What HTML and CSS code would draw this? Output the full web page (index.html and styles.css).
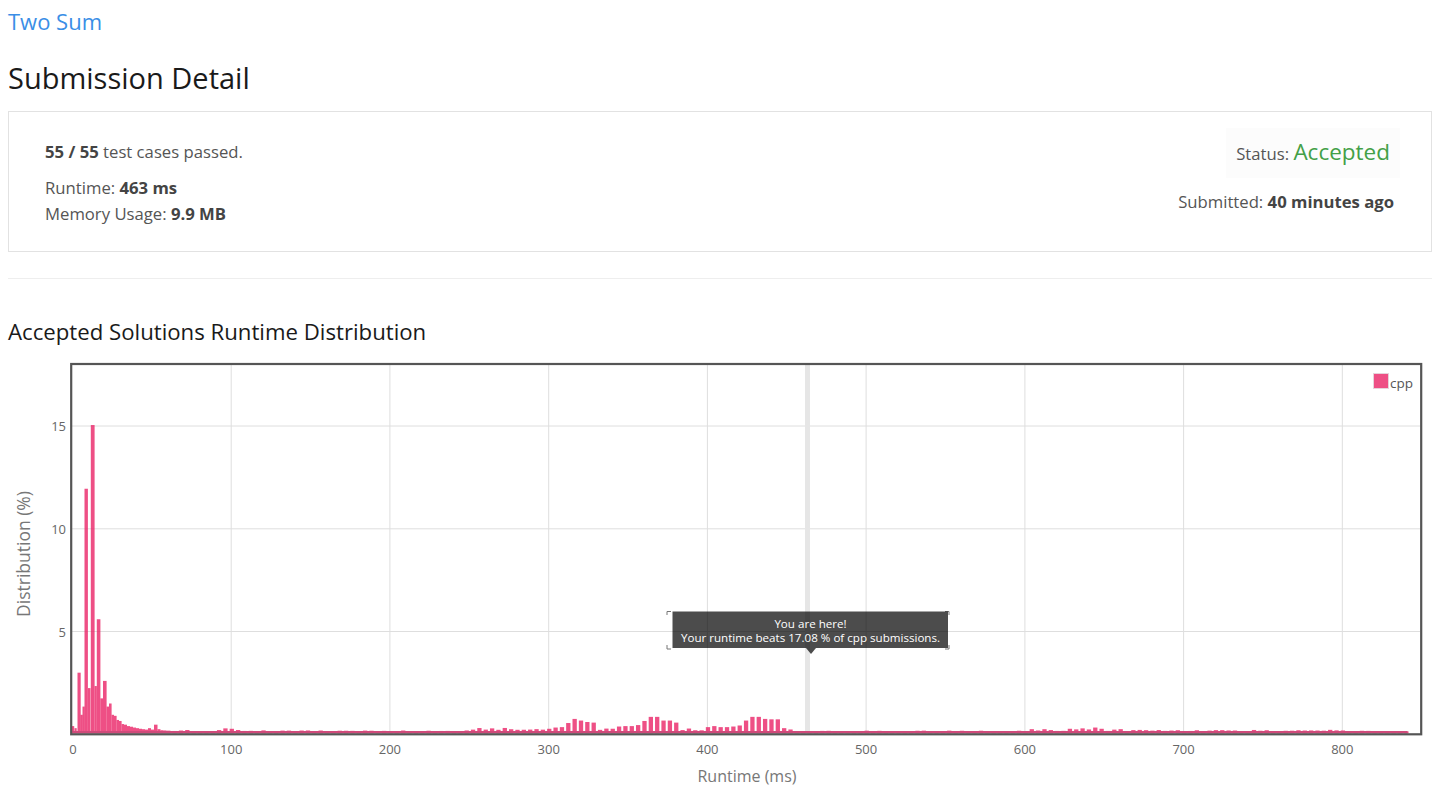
FILE: index.html
```html
<!DOCTYPE html>
<html lang="en">
<head>
<meta charset="utf-8">
<title>Submission Detail</title>
<link rel="stylesheet" href="styles.css">
</head>
<body>
<div class="page">
  <a class="problem-link" href="#">Two Sum</a>
  <h3 class="title">Submission Detail</h3>
  <div class="card">
    <div class="card-left">
      <div class="passed"><b>55 / 55</b> test cases passed.</div>
      <div class="stats">
        <div class="stat">Runtime: <b>463 ms</b></div>
        <div class="stat">Memory Usage: <b>9.9 MB</b></div>
      </div>
    </div>
    <div class="card-right">
      <div class="status">Status: <span class="accepted">Accepted</span></div>
      <div class="submitted">Submitted: <b>40 minutes ago</b></div>
    </div>
  </div>
  <hr class="divider">
  <h4 class="chart-title">Accepted Solutions Runtime Distribution</h4>
  <div class="chart">
    <svg class="chart-svg" width="1424" height="438" viewBox="8 350 1424 438" xmlns="http://www.w3.org/2000/svg">
      <g class="grid">
        <line x1="231.2" y1="365" x2="231.2" y2="733"/>
        <line x1="389.9" y1="365" x2="389.9" y2="733"/>
        <line x1="548.7" y1="365" x2="548.7" y2="733"/>
        <line x1="707.4" y1="365" x2="707.4" y2="733"/>
        <line x1="866.1" y1="365" x2="866.1" y2="733"/>
        <line x1="1024.9" y1="365" x2="1024.9" y2="733"/>
        <line x1="1183.6" y1="365" x2="1183.6" y2="733"/>
        <line x1="1342.3" y1="365" x2="1342.3" y2="733"/>
        <line x1="72" y1="426" x2="1420" y2="426"/>
        <line x1="72" y1="528.8" x2="1420" y2="528.8"/>
        <line x1="72" y1="631.5" x2="1420" y2="631.5"/>
      </g>
      <rect class="highlight" x="805" y="365" width="5" height="368"/>
      <g id="bars" class="bars"></g>
      <rect class="baseline" x="72.5" y="731" width="1335" height="2.4"/>
      <rect class="frame" x="71.2" y="364" width="1350" height="370.3"/>
      <g class="ticks">
        <text x="66" y="431" text-anchor="end">15</text>
        <text x="66" y="533.8" text-anchor="end">10</text>
        <text x="66" y="636.5" text-anchor="end">5</text>
        <text x="73" y="754" text-anchor="middle">0</text>
        <text x="231.2" y="754" text-anchor="middle">100</text>
        <text x="389.9" y="754" text-anchor="middle">200</text>
        <text x="548.7" y="754" text-anchor="middle">300</text>
        <text x="707.4" y="754" text-anchor="middle">400</text>
        <text x="866.1" y="754" text-anchor="middle">500</text>
        <text x="1024.9" y="754" text-anchor="middle">600</text>
        <text x="1183.6" y="754" text-anchor="middle">700</text>
        <text x="1342.3" y="754" text-anchor="middle">800</text>
      </g>
      <text class="axis-title" x="747" y="782" text-anchor="middle">Runtime (ms)</text>
      <text class="axis-title axis-title-y" transform="translate(30 554) rotate(-90)" text-anchor="middle">Distribution (%)</text>
      <g class="legend">
        <rect class="legend-box" x="1373.5" y="373.5" width="15" height="15"/>
        <text x="1390" y="388">cpp</text>
      </g>
      <g class="tooltip">
        <path class="tip-corners" d="M667 615V611.5H671 M945 611.5H949V615 M667 645V649H671 M945 649H949V645"/>
        <rect class="tip-box" x="672.5" y="611.5" width="275.5" height="36.5"/>
        <polygon class="tip-box" points="806,648 816,648 811,654"/>
        <text class="tip-text" x="810.5" y="628.3" text-anchor="middle">You are here!</text>
        <text class="tip-text" x="810.5" y="641.6" text-anchor="middle">Your runtime beats 17.08 % of cpp submissions.</text>
      </g>
    </svg>
  </div>
</div>
<script src="script.js"></script>
</body>
</html>
```

FILE: styles.css
```css
html, body {
  margin: 0;
  padding: 0;
  background: #fff;
}
body {
  font-family: "Open Sans", "Noto Sans", sans-serif;
  color: #555;
  overflow: hidden;
}
.page {
  padding: 8px 5px 0 8px;
}
.problem-link {
  display: block;
  font-size: 22px;
  line-height: 26px;
  color: #3a8ee6;
  text-decoration: none;
}
.title {
  margin: 26px 0 0;
  font-size: 29px;
  line-height: 36px;
  font-weight: 400;
  color: #1a1a1a;
}
.card {
  box-sizing: border-box;
  height: 141px;
  margin-top: 15px;
  border: 1px solid #e2e2e2;
  display: flex;
  justify-content: space-between;
  font-size: 16.7px;
}
.card b {
  font-weight: 700;
  color: #444;
}
.card-left {
  padding: 27px 0 0 36px;
}
.passed,
.stat {
  line-height: 26px;
}
.stats {
  margin-top: 10px;
}
.card-right {
  padding: 16px 37px 0 0;
  display: flex;
  flex-direction: column;
  align-items: flex-end;
}
.status {
  padding: 8px 10px;
  margin-right: -6px;
  line-height: 32px;
  background: #fcfcfc;
}
.accepted {
  font-size: 22.5px;
  color: #43a047;
}
.submitted {
  margin-top: 11px;
  line-height: 26px;
}
.divider {
  margin: 26px 0 0;
  border: 0;
  border-top: 1px solid #eee;
  height: 0;
}
.chart-title {
  margin: 39px 0 0;
  font-size: 22.2px;
  line-height: 28px;
  font-weight: 400;
  color: #1a1a1a;
}
.chart {
  margin-top: 4px;
}
.chart-svg {
  display: block;
  font-family: "Open Sans", "Noto Sans", sans-serif;
}
.grid line {
  stroke: #dedede;
  stroke-width: 1;
}
.highlight {
  fill: #e6e6e6;
}
.bars rect {
  fill: rgba(233, 30, 99, 0.78);
}
.baseline {
  fill: #cf4a7a;
}
.frame {
  fill: none;
  stroke: #555;
  stroke-width: 2.2;
}
.ticks text {
  font-size: 13px;
  fill: #666;
}
.axis-title {
  font-size: 16px;
  fill: #777;
}
.axis-title-y {
  font-size: 17.5px;
}
.legend-box {
  fill: #ee4f85;
  stroke: #e6d3da;
  stroke-width: 1;
}
.legend text {
  font-size: 13.5px;
  fill: #555;
}
.tip-box {
  fill: rgba(0, 0, 0, 0.7);
}
.tip-corners {
  fill: none;
  stroke: #777;
  stroke-width: 1;
}
.tip-text {
  font-size: 11.6px;
  fill: #fff;
}
```

FILE: script.js
```js
(function () {
  var NS = "http://www.w3.org/2000/svg";
  var g = document.getElementById("bars");
  var X0 = 72.5, SX = 1.5873, Y0 = 733.3, SY = 20.55;

  function bar(x, w, p) {
    var r = document.createElementNS(NS, "rect");
    var h = p * SY;
    r.setAttribute("x", x.toFixed(2));
    r.setAttribute("y", (Y0 - h).toFixed(2));
    r.setAttribute("width", w);
    r.setAttribute("height", h.toFixed(2));
    g.appendChild(r);
  }

  var early = [
    [72, 2.2, 0.35], [74.5, 2.2, 0.25], [77.5, 3.2, 2.95], [80.5, 2.2, 0.9],
    [82.5, 2.2, 1.3], [84.5, 3.4, 11.9], [88, 2.5, 2.2], [90.8, 3.8, 15.0],
    [94.6, 2.2, 2.3], [96.8, 3.6, 5.55], [100.4, 2.6, 1.7], [103, 3.6, 2.55],
    [106.6, 2.4, 1.3], [109, 2.6, 1.45], [111.6, 2.4, 0.9], [114, 2.6, 0.85],
    [116.6, 2.4, 0.65], [119, 2.6, 0.6], [121.6, 2.4, 0.45], [124, 3, 0.42],
    [127, 3, 0.35], [130, 3, 0.32], [133, 3, 0.28], [136, 3, 0.25],
    [139, 3, 0.22], [142, 3, 0.2], [145, 3, 0.18], [148, 3, 0.25],
    [151, 3, 0.18], [154, 3.5, 0.42], [157.5, 3, 0.2], [160.5, 3, 0.15],
    [163.5, 2.7, 0.14]
  ];
  early.forEach(function (b) { bar(b[0], b[1], b[2]); });

  var special = {
    95: 0.24, 99: 0.22, 263: 0.24, 271: 0.26, 299: 0.22, 303: 0.28, 307: 0.3,
    311: 0.5, 315: 0.7, 319: 0.62, 323: 0.55, 327: 0.52,
    343: 0.33, 347: 0.35, 351: 0.35, 355: 0.4,
    359: 0.6, 363: 0.8, 367: 0.8, 371: 0.62, 375: 0.62, 379: 0.52,
    399: 0.3, 403: 0.35, 407: 0.3, 411: 0.3, 415: 0.33, 419: 0.38,
    423: 0.62, 427: 0.8, 431: 0.8, 435: 0.7, 439: 0.68, 443: 0.68, 447: 0.25,
    627: 0.22, 635: 0.24, 643: 0.28, 647: 0.22
  };

  function base(ms) {
    var n = Math.sin(ms * 12.9898) * 43758.5453;
    n = n - Math.floor(n);
    var b;
    if (ms < 75) b = 0.16;
    else if (ms < 90) b = 0.1;
    else if (ms < 106) b = 0.2;
    else if (ms < 250) b = 0.11;
    else if (ms < 300) b = 0.2;
    else if (ms < 455) b = 0.18;
    else if (ms < 600) b = 0.1;
    else if (ms < 660) b = 0.16;
    else if (ms < 800) b = 0.13;
    else b = 0.1;
    return b * (0.7 + 0.6 * n);
  }

  for (var ms = 59; ms <= 839; ms += 4) {
    var p = special[ms] != null ? special[ms] : base(ms);
    bar(X0 + ms * SX, 4.3, p);
  }
})();
```
